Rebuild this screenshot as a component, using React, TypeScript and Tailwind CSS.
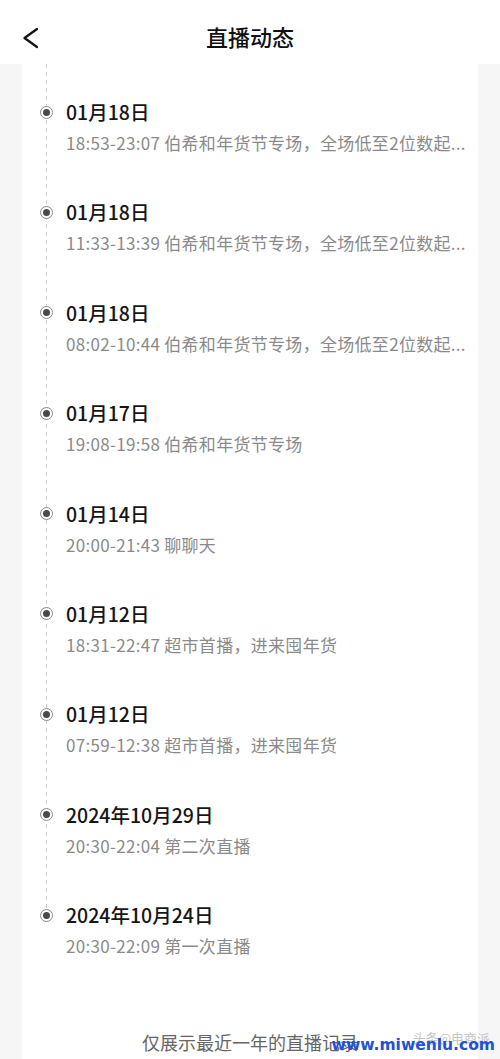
import React from "react";

interface LiveRecord {
  date: string;
  time: string;
  title: string;
}

const records: LiveRecord[] = [
  { date: "01月18日", time: "18:53-23:07", title: "伯希和年货节专场，全场低至2位数起..." },
  { date: "01月18日", time: "11:33-13:39", title: "伯希和年货节专场，全场低至2位数起..." },
  { date: "01月18日", time: "08:02-10:44", title: "伯希和年货节专场，全场低至2位数起..." },
  { date: "01月17日", time: "19:08-19:58", title: "伯希和年货节专场" },
  { date: "01月14日", time: "20:00-21:43", title: "聊聊天" },
  { date: "01月12日", time: "18:31-22:47", title: "超市首播，进来囤年货" },
  { date: "01月12日", time: "07:59-12:38", title: "超市首播，进来囤年货" },
  { date: "2024年10月29日", time: "20:30-22:04", title: "第二次直播" },
  { date: "2024年10月24日", time: "20:30-22:09", title: "第一次直播" },
];

/** Ring-with-dot timeline marker */
function Dot() {
  return (
    <span className="relative z-10 flex h-[13px] w-[13px] shrink-0 items-center justify-center rounded-full border-[1.5px] border-[#8a8a8a] bg-white">
      <span className="h-[7px] w-[7px] rounded-full bg-[#4a4a4a]" />
    </span>
  );
}

export default function App() {
  return (
    <div className="relative flex h-[1059px] w-full flex-col overflow-hidden bg-[#f6f6f6] font-['Noto_Sans_CJK_SC',sans-serif]">
      {/* ── HEADER ── */}
      <div className="relative flex h-[64px] shrink-0 items-center justify-center bg-white pt-2">
        <button className="absolute left-[22px] top-[27px] h-[22px] w-[16px]">
          <svg viewBox="0 0 16 22" className="h-[22px] w-[16px]" fill="none">
            <path d="M15 2 L2.5 11 L15 20" stroke="#111" strokeWidth="2.2" strokeLinecap="round" strokeLinejoin="round" />
          </svg>
        </button>
        <h1 className="text-[22px] font-medium leading-[28px] text-[#111]">直播动态</h1>
      </div>

      {/* ── CARD ── */}
      <div className="relative mx-[22px] flex flex-1 flex-col bg-white pt-[34px]">
        <div className="absolute left-[24px] top-0 h-[851px] w-px bg-[repeating-linear-gradient(to_bottom,#cfcfcf_0px,#cfcfcf_4px,transparent_4px,transparent_8px)]" />

        <div className="flex flex-col gap-[41.4px]">
          {records.map((r, i) => (
            <div key={i} className="flex flex-col pl-[18px] pr-[4px]">
              <div className="flex h-[28px] items-center gap-[13px]">
                <Dot />
                <span className="text-[19.5px] font-medium leading-[28px] text-[#161616]">{r.date}</span>
              </div>
              <p className="mt-[3px] overflow-hidden whitespace-nowrap pl-[26px] text-[17px] leading-[28px] tracking-[0.3px] text-[#8a8a8a]">
                {r.time} {r.title}
              </p>
            </div>
          ))}
        </div>

        <p className="mt-[68px] text-center text-[18px] leading-[28px] text-[#666]">仅展示最近一年的直播记录</p>
      </div>

      {/* ── WATERMARK ── */}
      <span className="absolute bottom-[13px] right-[10px] text-[13px] leading-[16px] text-[#c4c4c4]">头条@电商派</span>
      <span className="absolute bottom-[3px] right-[5px] font-['DejaVu_Sans',sans-serif] text-[15.5px] font-bold leading-[22px] text-[#2251d6]">
        www.miwenlu.com
      </span>
    </div>
  );
}
